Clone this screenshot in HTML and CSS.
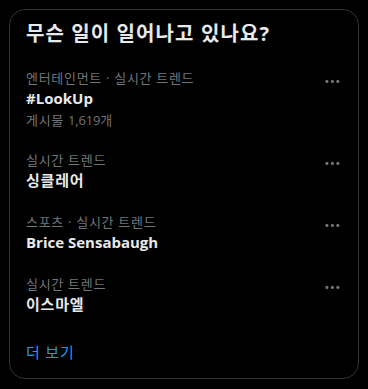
FILE: index.html
```html
<!DOCTYPE html>
<html lang="ko">
<head>
<meta charset="utf-8">
<link rel="stylesheet" href="styles.css">
</head>
<body>
<section class="card">
  <h2 class="title">무슨 일이 일어나고 있나요?</h2>
  <div class="trend">
    <div class="info">
      <div class="meta">엔터테인먼트 · 실시간 트렌드</div>
      <div class="name">#LookUp</div>
      <div class="meta posts">게시물 <span class="num">1,619</span>개</div>
    </div>
    <svg class="more" viewBox="0 0 24 24"><circle cx="5" cy="12" r="2"/><circle cx="12" cy="12" r="2"/><circle cx="19" cy="12" r="2"/></svg>
  </div>
  <div class="trend">
    <div class="info">
      <div class="meta">실시간 트렌드</div>
      <div class="name ko">싱클레어</div>
    </div>
    <svg class="more" viewBox="0 0 24 24"><circle cx="5" cy="12" r="2"/><circle cx="12" cy="12" r="2"/><circle cx="19" cy="12" r="2"/></svg>
  </div>
  <div class="trend">
    <div class="info">
      <div class="meta">스포츠 · 실시간 트렌드</div>
      <div class="name">Brice Sensabaugh</div>
    </div>
    <svg class="more" viewBox="0 0 24 24"><circle cx="5" cy="12" r="2"/><circle cx="12" cy="12" r="2"/><circle cx="19" cy="12" r="2"/></svg>
  </div>
  <div class="trend">
    <div class="info">
      <div class="meta">실시간 트렌드</div>
      <div class="name ko">이스마엘</div>
    </div>
    <svg class="more" viewBox="0 0 24 24"><circle cx="5" cy="12" r="2"/><circle cx="12" cy="12" r="2"/><circle cx="19" cy="12" r="2"/></svg>
  </div>
  <a class="showmore" href="#">더 보기</a>
</section>
</body>
</html>
```
FILE: styles.css
```css
html, body {
  margin: 0;
  padding: 0;
  background: #000;
}
body {
  padding: 9px 0 0 9px;
  font-family: "Open Sans", "Noto Sans CJK KR", sans-serif;
  color: #e7e9ea;
}
.card {
  box-sizing: border-box;
  width: 350px;
  border: 1px solid #2f3336;
  border-radius: 16px;
  display: flex;
  flex-direction: column;
}
.title {
  margin: 0;
  padding: 12px 16px;
  font-size: 20px;
  line-height: 24px;
  font-weight: 700;
  letter-spacing: 1.1px;
  color: #e7e9ea;
}
.trend {
  display: flex;
  align-items: flex-start;
  padding: 12px 16px;
}
.info {
  flex: 1;
  display: flex;
  flex-direction: column;
}
.meta {
  font-size: 13px;
  line-height: 16px;
  letter-spacing: 0.7px;
  color: #71767b;
}
.num {
  letter-spacing: -0.2px;
}
.name {
  padding-top: 2px;
  font-size: 15px;
  line-height: 20px;
  font-weight: 700;
  color: #e7e9ea;
}
.name.ko {
  letter-spacing: 0.8px;
}
.posts {
  padding-top: 4px;
}
.more {
  width: 18.75px;
  height: 18.75px;
  margin-top: 2px;
  fill: #71767b;
}
.showmore {
  padding: 16px;
  font-size: 15px;
  line-height: 20px;
  letter-spacing: 0.8px;
  color: #1d9bf0;
  text-decoration: none;
}
```
